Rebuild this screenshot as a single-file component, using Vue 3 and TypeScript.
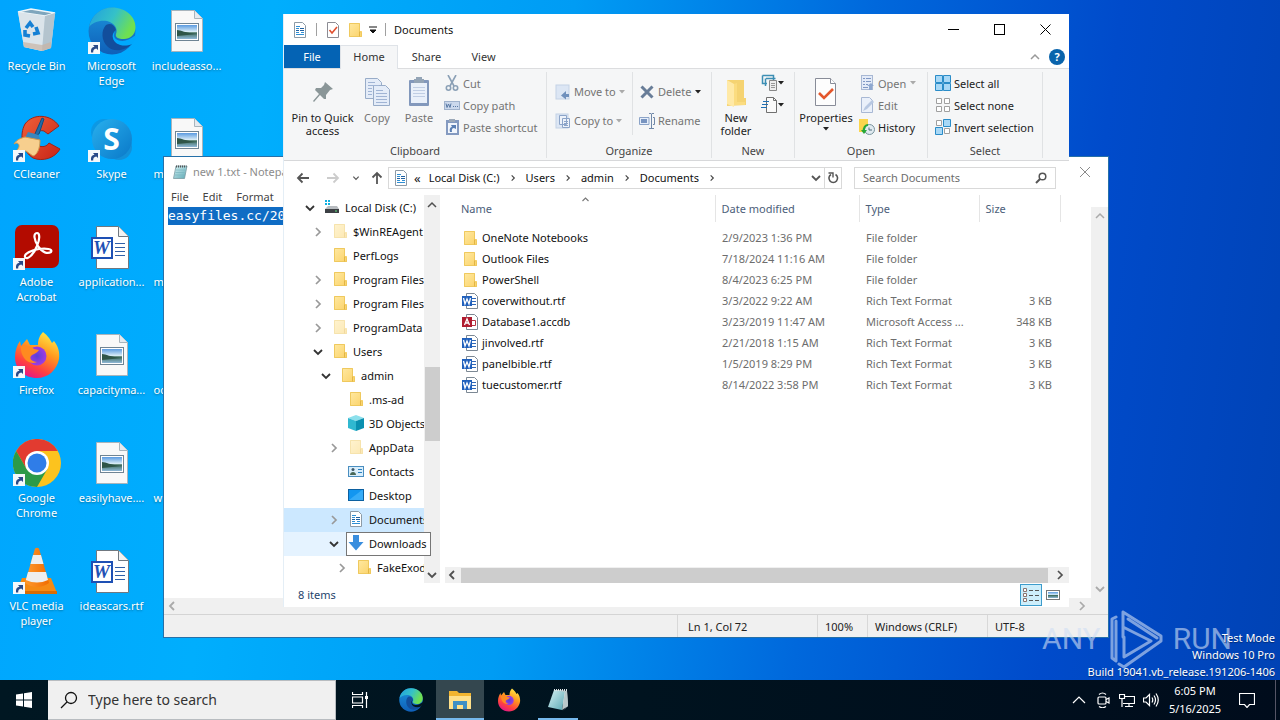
<script setup lang="ts">
import { ref } from 'vue'

interface Shortcut { label: string; icon: string; link?: boolean; cut?: boolean; letter?: string }
interface TreeNode { name: string; icon: string; level: number; state: 'open' | 'closed' | 'none'; cls?: string }
interface FileRow { name: string; icon: string; date: string; type: string; size: string }

const shortcuts: Shortcut[] = [
  { label: 'Recycle Bin', icon: 'bin' },
  { label: 'CCleaner', icon: 'ccleaner', link: true },
  { label: 'Adobe Acrobat', icon: 'acrobat', link: true },
  { label: 'Firefox', icon: 'firefox', link: true },
  { label: 'Google Chrome', icon: 'chrome', link: true },
  { label: 'VLC media player', icon: 'vlc', link: true },
  { label: 'Microsoft Edge', icon: 'edge', link: true },
  { label: 'Skype', icon: 'skype', link: true, letter: 'S' },
  { label: 'application...', icon: 'worddoc', letter: 'W' },
  { label: 'capacityma...', icon: 'picture' },
  { label: 'easilyhave....', icon: 'picture' },
  { label: 'ideascars.rtf', icon: 'worddoc', letter: 'W' },
  { label: 'includeasso...', icon: 'picture' },
  { label: 'm', icon: 'picture', cut: true },
  { label: 'm', icon: 'picture', cut: true },
  { label: 'oc', icon: 'picture', cut: true },
  { label: 'w', icon: 'picture', cut: true }
]

const tree: TreeNode[] = [
  { name: 'Local Disk (C:)', icon: 'disk', level: 0, state: 'open' },
  { name: '$WinREAgent', icon: 'folder', level: 1, state: 'closed', cls: 'hiddenfolder' },
  { name: 'PerfLogs', icon: 'folder', level: 1, state: 'none' },
  { name: 'Program Files', icon: 'folder', level: 1, state: 'closed' },
  { name: 'Program Files', icon: 'folder', level: 1, state: 'closed' },
  { name: 'ProgramData', icon: 'folder', level: 1, state: 'closed', cls: 'hiddenfolder' },
  { name: 'Users', icon: 'folder', level: 1, state: 'open' },
  { name: 'admin', icon: 'folder', level: 2, state: 'open' },
  { name: '.ms-ad', icon: 'folder', level: 3, state: 'none' },
  { name: '3D Objects', icon: 'cube', level: 3, state: 'none' },
  { name: 'AppData', icon: 'folder', level: 3, state: 'closed', cls: 'hiddenfolder' },
  { name: 'Contacts', icon: 'contacts', level: 3, state: 'none' },
  { name: 'Desktop', icon: 'desktop', level: 3, state: 'none' },
  { name: 'Documents', icon: 'docs', level: 3, state: 'closed', cls: 'current' },
  { name: 'Downloads', icon: 'down', level: 3, state: 'open', cls: 'hover' },
  { name: 'FakeExodus', icon: 'folder', level: 4, state: 'closed' }
]

const files: FileRow[] = [
  { name: 'OneNote Notebooks', icon: 'folder', date: '2/9/2023 1:36 PM', type: 'File folder', size: '' },
  { name: 'Outlook Files', icon: 'folder', date: '7/18/2024 11:16 AM', type: 'File folder', size: '' },
  { name: 'PowerShell', icon: 'folder', date: '8/4/2023 6:25 PM', type: 'File folder', size: '' },
  { name: 'coverwithout.rtf', icon: 'word16', date: '3/3/2022 9:22 AM', type: 'Rich Text Format', size: '3 KB' },
  { name: 'Database1.accdb', icon: 'access16', date: '3/23/2019 11:47 AM', type: 'Microsoft Access ...', size: '348 KB' },
  { name: 'jinvolved.rtf', icon: 'word16', date: '2/21/2018 1:15 AM', type: 'Rich Text Format', size: '3 KB' },
  { name: 'panelbible.rtf', icon: 'word16', date: '1/5/2019 8:29 PM', type: 'Rich Text Format', size: '3 KB' },
  { name: 'tuecustomer.rtf', icon: 'word16', date: '8/14/2022 3:58 PM', type: 'Rich Text Format', size: '3 KB' }
]

const crumbs = ['Local Disk (C:)', 'Users', 'admin', 'Documents']
const fileQuery = ref('')
const taskQuery = ref('')
</script>

<template>
  <div class="desktop">
    <svg class="defs" aria-hidden="true">
      <defs>
        <linearGradient id="gEdge1" x1="0" y1="0" x2="1" y2="0.4"><stop offset="0" stop-color="#1f9fe0" /><stop offset=".55" stop-color="#35c1c8" /><stop offset="1" stop-color="#6fe050" /></linearGradient>
        <linearGradient id="gEdge2" x1="0" y1="0" x2="0" y2="1"><stop offset="0" stop-color="#1b93dc" /><stop offset="1" stop-color="#0f5fb8" /></linearGradient>
        <linearGradient id="gFox" x1=".8" y1="0" x2=".3" y2="1"><stop offset="0" stop-color="#fff04a" /><stop offset=".4" stop-color="#ff9a1f" /><stop offset=".75" stop-color="#ff4040" /><stop offset="1" stop-color="#e3158a" /></linearGradient>
        <radialGradient id="gFox2"><stop offset="0" stop-color="#5a3fd8" /><stop offset="1" stop-color="#a03ce0" /></radialGradient>
        <linearGradient id="gSky" x1="0" y1="0" x2="0" y2="1"><stop offset="0" stop-color="#5a9ae0" /><stop offset=".5" stop-color="#dff0f8" /><stop offset=".55" stop-color="#3c6a58" /><stop offset="1" stop-color="#8fb8d8" /></linearGradient>
        <linearGradient id="gSkype" x1="0" y1="0" x2="1" y2="1"><stop offset="0" stop-color="#28b0ee" /><stop offset="1" stop-color="#0a78c8" /></linearGradient>
        <linearGradient id="gFolder" x1="0" y1="0" x2="1" y2="1"><stop offset="0" stop-color="#ffe9a2" /><stop offset="1" stop-color="#fbd268" /></linearGradient>
        <linearGradient id="gCone" x1="0" y1="0" x2="1" y2="0"><stop offset="0" stop-color="#ff9a30" /><stop offset="1" stop-color="#f06c00" /></linearGradient>
        <linearGradient id="gNote" x1="0" y1="0" x2="1" y2="1"><stop offset="0" stop-color="#d8f2f4" /><stop offset="1" stop-color="#5aa8b4" /></linearGradient>
        <linearGradient id="gRed" x1="0" y1="0" x2="1" y2="1"><stop offset="0" stop-color="#f06038" /><stop offset="1" stop-color="#c82418" /></linearGradient>
      </defs>
      <symbol id="bin" viewBox="0 0 48 48">
        <path d="M5 5 18 2 42 6 38 41 29 44 11 40Z" fill="#c8dce8" /><path d="M5 5 18 2 42 6 32 9Z" fill="#7fa6bd" stroke="#eef6fa" stroke-width="1.5" />
        <path d="M5 5 32 9 29 44 11 40Z" fill="#dbe4ea" /><path d="M32 9 42 6 38 41 29 44Z" fill="#b4c4ce" /><path d="M10 35 29 38 38 35 38 41 29 44 11 40Z" fill="#c8b4a4" opacity=".7" />
        <g fill="none" stroke="#1580d4" stroke-width="3.6"><path d="M13 21 17 16 20 20" /><path d="M23 20 25 26 20 27" /><path d="M17 29 12 28 12 23" /></g>
      </symbol>
      <symbol id="edge" viewBox="0 0 48 48">
        <circle cx="24" cy="24" r="23.5" fill="url(#gEdge2)" />
        <path d="M1 20C4 7 14 .5 24 .5 38 .5 47.500 10 47.500 20 47.500 28 42 32 36 32 30 32 27 30 28 27 30 22 27 16 19 14 11 13 4 16 1 20Z" fill="url(#gEdge1)" />
        <path d="M18 18C13 23 13 34 20 40 27 46 38 43 44 37 37 40 27 38 25 31 24 28 27 25 28 23 26 17 22 16 18 18Z" fill="#124e9c" />
        <path d="M28 23C25 27 25 32 31 33.500 36 35 41 33 48 28L48 32 44 37C35 41 26 37 25 31 24 27 26 25 28 23Z" fill="#00a8fc" />
      </symbol>
      <symbol id="edgebar" viewBox="0 0 48 48">
        <circle cx="24" cy="24" r="23.500" fill="url(#gEdge2)" />
        <path d="M1 20C4 7 14 .5 24 .5 38 .5 47.500 10 47.500 20 47.500 28 42 32 36 32 30 32 27 30 28 27 30 22 27 16 19 14 11 13 4 16 1 20Z" fill="url(#gEdge1)" />
        <path d="M18 18C13 23 13 34 20 40 27 46 38 43 44 37 37 40 27 38 25 31 24 28 27 25 28 23 26 17 22 16 18 18Z" fill="#124e9c" />
        <path d="M28 23C25 27 25 32 31 33.500 36 35 41 33 48 28L48 32 44 37C35 41 26 37 25 31 24 27 26 25 28 23Z" fill="#021620" />
      </symbol>
      <symbol id="picture" viewBox="0 0 48 48">
        <path d="M8.500 3.500H31.500L39.500 11.500V44.500H8.500Z" fill="#f8f8f8" stroke="#a8b4bc" /><path d="M31.500 3.500V11.500H39.500" fill="#e4eaf0" stroke="#a8b4bc" />
        <rect x="12.500" y="16.500" width="23" height="17" fill="#fff" stroke="#6f8494" /><rect x="14" y="18" width="20" height="14" fill="url(#gSky)" /><path d="M14 23C18 23 22 26 34 27L14 29Z" fill="#2f5548" />
      </symbol>
      <symbol id="worddoc" viewBox="0 0 48 48">
        <path d="M8.500 3.500H30.500L40.500 13.500V45.500H8.500Z" fill="#fff" stroke="#707880" /><path d="M30.500 3.500V13.500H40.500" fill="#f2f2f2" stroke="#707880" />
        <path d="M27 20.500H37M27 24.500H37M27 28.500H37M27 32.500H37" stroke="#3060a8" /><rect x="4" y="15" width="20" height="20" fill="#fff" stroke="#1e50b4" stroke-width="2" />
      </symbol>
      <symbol id="ccleaner" viewBox="0 0 48 48">
        <path d="M46 11C38-1 20-2 12 9 6 20 9 36 20 43 30 47 42 43 47 34L36 28C33 33 25 33 22 27 20 20 25 14 31 16L35 19Z" fill="url(#gRed)" stroke="#9e2418" />
        <path d="M29 3 31 4 26 19 21 21Z" fill="#206ca8" stroke="#124b7c" /><path d="M15 17 26 20 27 25 12 23Z" fill="#3a86bd" /><path d="M12 22 27 25C27 34 24 40 20 41L13 36 3 36C9 31 5 26 1 29 4 24 9 23 12 22Z" fill="#f7cf8e" stroke="#d09a50" />
      </symbol>
      <symbol id="skype" viewBox="0 0 48 48">
        <circle cx="16" cy="17" r="13" fill="#0c98e4" /><circle cx="31" cy="32" r="13" fill="#1390d8" /><circle cx="24" cy="24" r="20" fill="url(#gSkype)" />
      </symbol>
      <symbol id="acrobat" viewBox="0 0 48 48">
        <rect x="2" y="2" width="44" height="43" rx="7" fill="#b30b00" /><path d="M24 10C20 10 21 17 25 23 29 30 35 31 38 29 40 26 33 25 26 26 18 27 11 31 12 34 14 38 21 31 24 23 27 16 27 10 24 10Z" fill="none" stroke="#fff" stroke-width="2.200" />
      </symbol>
      <symbol id="firefox" viewBox="0 0 48 48">
        <path d="M30 1C35 5 37 8 39 12L41 10C45 15 47 21 46 28 44 39 35 47 24 47 11 47 2 38 2 26 2 20 4 14 7 10L8 15 14 8 17 14 25 14C25 8 27 4 30 1Z" fill="url(#gFox)" />
        <circle cx="24" cy="25" r="9.500" fill="url(#gFox2)" /><path d="M8 16C12 13 18 15 21 18L26 19C24 22 21 23 19 24 15 27 19 31 24 31 15 35 7 25 8 16Z" fill="#ff8a20" />
      </symbol>
      <symbol id="chrome" viewBox="0 0 48 48">
        <circle cx="24" cy="24" r="24" fill="#fcc31e" /><path d="M3.200 12A24 24 0 0 1 44.800 12L24 12 13.600 30Z" fill="#e23b30" /><path d="M3.200 12A24 24 0 0 0 24 48L34.400 30H13.600Z" fill="#2c9a48" />
        <circle cx="24" cy="24" r="12" fill="#fff" /><circle cx="24" cy="24" r="9.500" fill="#2f7de8" />
      </symbol>
      <symbol id="vlc" viewBox="0 0 48 48">
        <path d="M9 31H38L44 46H3Z" fill="#f58a14" /><path d="M3 44H44V47H3Z" fill="#d86c04" /><path d="M22 1.500Q24 0 26 1.500L36 36Q24 44 12 36Z" fill="url(#gCone)" />
        <path d="M20 8H28L30.500 17H17.500ZM15 25H33L35 33Q24 38 12.800 33Z" fill="#eee" />
      </symbol>
      <symbol id="linkmark" viewBox="0 0 12 12"><rect width="12" height="12" fill="#f4f8fb" /><path d="M3 10.500C2.500 7 4 5 6.500 4.800L5 3H10V8L8.300 6.400C6 6.800 5 8.300 5.200 10.500Z" fill="#2a4a88" /></symbol>
      <symbol id="folder" viewBox="0 0 16 16"><path d="M2 1H13V9H15V15H2Z" fill="url(#gFolder)" /><path d="M2.500 1.500H12.500V9.500L14.500 10.500V14.500H2.500Z" fill="none" stroke="#efc95e" /><path d="M12.500 9.500V14.500" stroke="#e2b544" /></symbol>
      <symbol id="docs" viewBox="0 0 16 16"><path d="M2.500.5H10.500L13.500 3.500V15.500H2.500Z" fill="#fff" stroke="#8c9aa6" /><path d="M4 4.500H8M4 6.500H7M4 10.500H7M4 12.500H12M9 10.500H12" stroke="#2f8fd4" /><path d="M8 6.500H12M8 8.500H12M4 8.500H7" stroke="#2060a0" /></symbol>
      <symbol id="disk" viewBox="0 0 16 16"><path d="M1 1H3V3H1ZM4 1H6V3H4ZM1 4H3V6H1ZM4 4H6V6H4Z" fill="#10b0e0" /><path d="M4 7H13L15 10H1Z" fill="#b8bcc0" /><path d="M1 10H15V14H1Z" fill="#3c4044" /><path d="M11 12H13" stroke="#60e080" /></symbol>
      <symbol id="cube" viewBox="0 0 16 16"><path d="M0 3 8 0 16 3 8 6Z" fill="#8ce0ec" /><path d="M0 3 8 6V16L0 13Z" fill="#30b8d0" /><path d="M8 6 16 3V13L8 16Z" fill="#0a90b0" /></symbol>
      <symbol id="contacts" viewBox="0 0 16 16"><rect x=".5" y="3.500" width="15" height="10" fill="#d8eefc" stroke="#4a8ec0" /><circle cx="5" cy="6.500" r="1.500" fill="#405868" /><path d="M2 12C2 8 8 8 8 12Z" fill="#486858" /><path d="M10 6.500H14M10 9.500H14" stroke="#2a80c0" /></symbol>
      <symbol id="desktop" viewBox="0 0 16 16"><rect x=".5" y="2.500" width="15" height="11" fill="#1296f0" stroke="#0c60a0" /><path d="M1 13 14 3H15V13Z" fill="#36acf8" /></symbol>
      <symbol id="down" viewBox="0 0 16 16"><path d="M5 0H11V7H15.500L8 15.500.5 7H5Z" fill="#3a8ede" /></symbol>
      <symbol id="word16" viewBox="0 0 16 16"><path d="M4.500.5H12.500L15.500 3.500V15.500H4.500Z" fill="#fff" stroke="#7c8894" /><path d="M10 5.500H14M10 8.500H14M10 11.500H14" stroke="#3068b8" /><rect y="3" width="10" height="10" fill="#2060bc" /><path d="M1.500 5 3 11 5 6 7 11 8.500 5" fill="none" stroke="#fff" stroke-width="1.300" /></symbol>
      <symbol id="access16" viewBox="0 0 16 16"><path d="M4.500.5H12.500L15.500 3.500V15.500H4.500Z" fill="#fff" stroke="#7c8894" /><path d="M10 6.500H13.500V11.500H10" fill="none" stroke="#b83040" /><rect y="3" width="10" height="10" fill="#b01c30" /><path d="M2.500 11 5 5 7.500 11M3.500 9H6.500" fill="none" stroke="#fff" stroke-width="1.300" /></symbol>
      <symbol id="check" viewBox="0 0 16 16"><path d="M2.500.5H10.500L13.500 3.500V15.500H2.500Z" fill="#fff" stroke="#8c8c94" /><path d="M4.500 8 7 11 12 5" fill="none" stroke="#e05030" stroke-width="1.600" /></symbol>
      <symbol id="chev" viewBox="0 0 12 12"><path d="M4 2 8 6 4 10" fill="none" stroke="currentColor" stroke-width="1.700" /></symbol>
      <symbol id="chevd" viewBox="0 0 12 12"><path d="M2 4 6 8 10 4" fill="none" stroke="currentColor" stroke-width="1.800" /></symbol>
      <symbol id="chevu" viewBox="0 0 12 12"><path d="M2 8 6 4 10 8" fill="none" stroke="currentColor" stroke-width="1.500" /></symbol>
      <symbol id="chevl" viewBox="0 0 12 12"><path d="M8 2 4 6 8 10" fill="none" stroke="currentColor" stroke-width="1.800" /></symbol>
      <symbol id="tri" viewBox="0 0 6 6"><path d="M0 1H6L3 4.500Z" fill="currentColor" /></symbol>
      <symbol id="notepad" viewBox="0 0 16 16"><path d="M4 2H15L12.500 14.500H1.500Z" fill="url(#gNote)" stroke="#7a9aa2" stroke-width=".8" /><path d="M4 2.500H14.500" stroke="#555" stroke-dasharray="1 1" stroke-width="2" /><path d="M4 6H13M3.500 8.500H12.500M3 11H12" stroke="#78b4be" stroke-width=".7" /></symbol>
      <symbol id="notebar" viewBox="0 0 24 24"><path d="M8 2 21 3 22 18 16 23 20 20Z" fill="#e6ecec" /><path d="M8 2 19 3 16 22 2 19Z" fill="url(#gNote)" /><path d="M8 2 21 3 22 18 16 22 19 4Z" fill="#b9c8ca" /><path d="M8 2H21" stroke="#dfe6e8" stroke-dasharray="1 1" stroke-width="2" /></symbol>
      <symbol id="pin" viewBox="0 0 24 24"><path d="M14 2 22 9 19 10 15 15 15 19 13 19 9 15 3 22 2 21 8 14 4 10 5 8 10 8 13 5Z" fill="#8a9698" /></symbol>
      <symbol id="copy" viewBox="0 0 32 32"><g fill="#e4ecf8" stroke="#98acc8"><path d="M4.500 2.500H16.500L20.500 6.500V22.500H4.500Z" /><path d="M12.500 9.500H24.500L28.500 13.500V29.500H12.500Z" /></g><path d="M7 6.500H14M7 9.500H18M7 12.500H11M7 15.500H11M7 18.500H11M15 14.500H22M15 17.500H26M15 20.500H26M15 23.500H26M15 26.500H26" stroke="#a0b4d4" /></symbol>
      <symbol id="paste" viewBox="0 0 32 32"><rect x="6" y="4" width="20" height="26" rx="1" fill="#8298bc" /><rect x="8" y="7" width="16" height="20" fill="#e9f0fa" /><path d="M11 3H13V1H19V3H21V7H11Z" fill="#93a4b6" /><path d="M10 11.500H22M10 14.500H22M10 17.500H22M10 20.500H22" stroke="#c0cee4" /></symbol>
      <symbol id="cut" viewBox="0 0 16 16"><g fill="none" stroke="#8ba0b6" stroke-width="1.600"><path d="M4 0 10 11M12 0 6 11" /><circle cx="4.500" cy="13" r="2.200" /><circle cx="11.500" cy="13" r="2.200" /></g></symbol>
      <symbol id="path" viewBox="0 0 16 16"><rect x=".5" y="4.500" width="15" height="8" fill="#cbd8ec" stroke="#a0b2cc" /><path d="M2 6.500 3 10.500 4.500 7 6 10.500 7 6.500M9 9.500H10M11 9.500H12M13 9.500H14" fill="none" stroke="#5878a4" /></symbol>
      <symbol id="pasteshort" viewBox="0 0 16 16"><rect x="2" y="1" width="13" height="15" fill="#849ac0" /><rect x="4" y="4" width="9" height="10" fill="#f2f6fc" /><path d="M5 0H11V3H5Z" fill="#9ba8b8" /><path d="M6 13C5 9 7 8 8 8L7 6H12V10L10 9C8 9 7.500 11 8 13Z" fill="#5c80b4" /></symbol>
      <symbol id="moveto" viewBox="0 0 16 16"><rect x="1" y="1" width="13" height="14" fill="#dce6f4" stroke="#c4d2e6" /><path d="M14 10H11V7L6 11.500 11 15.500V13H14Z" fill="#6f90bc" /></symbol>
      <symbol id="copyto" viewBox="0 0 16 16"><rect x="1" y="1" width="12" height="14" fill="#dce6f4" stroke="#c4d2e6" /><path d="M4.500 2.500H11.500V11.500H4.500ZM7.500 5.500H14.500V14.500H7.500Z" fill="#edf2fa" stroke="#8ca4c8" /><path d="M9 8.500H13M9 10.500H13M9 12.500H13" stroke="#8ca4c8" /></symbol>
      <symbol id="delete" viewBox="0 0 16 16"><path d="M2.500 2.500 13.500 13.500M13.500 2.500 2.500 13.500" stroke="#687d98" stroke-width="3" /></symbol>
      <symbol id="rename" viewBox="0 0 16 16"><path d="M.5 4.500H10V11.500H.5Z" fill="#e6eefa" stroke="#8ca4c8" /><path d="M2 6H8V10H2Z" fill="#7894c0" /><path d="M12.500 1V15M10 .5H12L12.500 1 13 .5H15M10 15.500H15M14 4.500H15.500V11.500H14" fill="none" stroke="#7088a8" /></symbol>
      <symbol id="bigfolder" viewBox="0 0 24 32"><path d="M3 4H20V22H22V29L3 30Z" fill="#f5d372" /><path d="M3 4 10 8V31L3 28Z" fill="#ffe9a6" /><path d="M10 8 13 7V26H21V29H10Z" fill="#fbdc80" /></symbol>
      <symbol id="newitem" viewBox="0 0 18 18"><path d="M1.500 1.500H12.500V6M1.500 1.500V9.500H6M5 4.500H14.500M4.500 4.500V12" fill="none" stroke="#3c8eb4" stroke-width="1.500" /><path d="M8.500 6.500H15.500V16.500H8.500Z" fill="#eee" stroke="#888" /><path d="M10 9.500H14M10 11.500H14M10 13.500H14" stroke="#999" /></symbol>
      <symbol id="easy" viewBox="0 0 18 18"><path d="M5.500 1.500H12.500L15.500 4.500V16.500H5.500Z" fill="#fafafa" stroke="#707070" /><path d="M12.500 1.500V4.500H15.500" fill="none" stroke="#707070" /><path d="M2 5.500H8M1 8.500H7M0 11.500H6" stroke="#2070b4" /></symbol>
      <symbol id="props" viewBox="0 0 24 32"><path d="M1.500 2.500H16.500L21.500 7.500V29.500H1.500Z" fill="#fdfdfd" stroke="#888c98" /><path d="M16.500 2.500V7.500H21.500" fill="#fff" stroke="#888c98" /><path d="M5 17 10 22 19 13" fill="none" stroke="#e4572c" stroke-width="2.600" /></symbol>
      <symbol id="open" viewBox="0 0 16 16"><rect x="2.500" y=".5" width="11" height="14" fill="#e4ebf8" stroke="#a8b8d4" /><path d="M4 3.500H6M7 3.500H12M4 6.500H6M7 6.500H12M4 9.500H6M7 9.500H9M4 12.500H9" stroke="#8098c4" /><path d="M8 11 12 8 15 11H13V15H10V11Z" fill="#8fa8d0" /></symbol>
      <symbol id="edit" viewBox="0 0 16 16"><path d="M2.500.5H10.500L13.500 3.500V15.500H2.500Z" fill="#eaf0fa" stroke="#a8b8d4" /><path d="M4 14 6 10 13 3 15 5 8 12Z" fill="#b8c8e2" /></symbol>
      <symbol id="history" viewBox="0 0 16 16"><path d="M0 0H9V6H10V13H0Z" fill="#fbd54c" /><circle cx="10.500" cy="10.500" r="5" fill="#e0eaf0" stroke="#78929c" /><path d="M10 8.500V11H13" fill="none" stroke="#506c7a" /><path d="M5 13C4 8 7 6 9 6" fill="none" stroke="#28a838" stroke-width="2.200" /><path d="M2 11H8L5 15Z" fill="#28a838" /></symbol>
      <symbol id="selall" viewBox="0 0 16 16"><path d="M.5.5H7.500V7.500H.5ZM8.500.5H15.500V7.500H8.500ZM.5 8.500H7.500V15.500H.5ZM8.500 8.500H15.500V15.500H8.500Z" fill="#a8d8f6" stroke="#2a8cc8" /></symbol>
      <symbol id="selnone" viewBox="0 0 16 16"><path d="M1.500 1.500H6.500V6.500H1.500ZM9.500 1.500H14.500V6.500H9.500ZM1.500 9.500H6.500V14.500H1.500ZM9.500 9.500H14.500V14.500H9.500Z" fill="#fff" stroke="#a0a0a0" /></symbol>
      <symbol id="selinv" viewBox="0 0 16 16"><path d="M1.500 1.500H6.500V6.500H1.500ZM9.500 9.500H14.500V14.500H9.500Z" fill="#fff" stroke="#a0a0a0" /><path d="M8.500.5H15.500V7.500H8.500ZM.5 8.500H7.500V15.500H.5Z" fill="#a8d8f6" stroke="#2a8cc8" /></symbol>
      <symbol id="lens" viewBox="0 0 12 12"><circle cx="7.500" cy="4.500" r="3.300" fill="none" stroke="currentColor" stroke-width="1.500" /><path d="M5 7 1 11" stroke="currentColor" stroke-width="2" /></symbol>
      <symbol id="biglens" viewBox="0 0 18 18"><circle cx="11" cy="7" r="5.500" fill="none" stroke="#111" stroke-width="1.300" /><path d="M7 11 1 17" stroke="#111" stroke-width="1.300" /></symbol>
      <symbol id="arrow" viewBox="0 0 16 16"><path d="M14 8H3M7.500 3.500 3 8 7.500 12.500" fill="none" stroke="currentColor" stroke-width="1.800" /></symbol>
      <symbol id="explorer" viewBox="0 0 24 24"><path d="M1 3H9L11 5H23V21H1Z" fill="#f2b530" /><path d="M1 8H23V21H1Z" fill="#ffe08a" /><path d="M5 13H19V21H15V17H9V21H5Z" fill="#3f8fc4" /></symbol>
    </svg>

    <main class="shortcuts">
      <button v-for="(s, i) in shortcuts" :key="i" class="shortcut" :class="{ cut: s.cut }" type="button">
        <span class="pic"><svg class="i48"><use :href="'#' + s.icon" /></svg><span v-if="s.letter" class="letter" :class="s.icon">{{ s.letter }}</span><svg v-if="s.link" class="mark"><use href="#linkmark" /></svg></span>
        <span class="cap">{{ s.label }}</span>
      </button>
    </main>

    <section class="notepad" aria-label="Notepad">
      <header class="np-title">
        <svg class="i16"><use href="#notepad" /></svg><span>new 1.txt - Notepad</span>
        <button class="np-close" type="button" aria-label="Close Notepad"><svg viewBox="0 0 12 12"><path d="M1 1 11 11M11 1 1 11" stroke="#8a8a8a" /></svg></button>
      </header>
      <nav class="np-menu"><button type="button">File</button><button type="button">Edit</button><button type="button">Format</button></nav>
      <div class="np-body">
        <div class="np-text"><mark>easyfiles.cc/2025</mark></div>
        <div class="np-vbar"><svg class="i12"><use href="#chevu" /></svg><svg class="i12"><use href="#chevd" /></svg></div>
      </div>
      <div class="np-hbar"><svg class="i12"><use href="#chevl" /></svg><svg class="i12"><use href="#chev" /></svg></div>
      <footer class="np-status"><span>Ln 1, Col 72</span><span>100%</span><span>Windows (CRLF)</span><span>UTF-8</span></footer>
    </section>

    <section class="explorer" aria-label="Documents">
      <header class="titlebar">
        <svg class="i16"><use href="#docs" /></svg><i class="bar"></i>
        <button type="button" aria-label="Properties"><svg class="i16"><use href="#check" /></svg></button>
        <button type="button" aria-label="New folder"><svg class="i16"><use href="#folder" /></svg></button>
        <button type="button" aria-label="Customize toolbar"><svg class="custom" viewBox="0 0 8 8"><path d="M0 1H8M1 4H7L4 7Z" fill="#111" stroke="#111" /></svg></button>
        <i class="bar"></i><h1>Documents</h1>
        <div class="winbtns">
          <button type="button" aria-label="Minimize"><svg viewBox="0 0 11 11"><path d="M0 5.500H11" stroke="#000" /></svg></button>
          <button type="button" aria-label="Maximize"><svg viewBox="0 0 11 11"><rect x=".5" y=".5" width="10" height="10" fill="none" stroke="#000" /></svg></button>
          <button type="button" aria-label="Close"><svg viewBox="0 0 11 11"><path d="M.5.5 10.500 10.500M10.500.5.5 10.500" stroke="#000" /></svg></button>
        </div>
      </header>

      <nav class="tabs">
        <button class="file" type="button">File</button><button class="on" type="button">Home</button><button type="button">Share</button><button type="button">View</button>
        <span class="tabend"><svg class="i12"><use href="#chevu" /></svg><button class="help" type="button" aria-label="Help">?</button></span>
      </nav>

      <div class="ribbon">
        <div class="group g1">
          <div class="tools">
            <button class="big pinbtn" type="button"><svg class="pinicon"><use href="#pin" /></svg><span>Pin to Quick access</span></button>
            <button class="big off" type="button"><svg class="i32"><use href="#copy" /></svg><span>Copy</span></button>
            <button class="big off" type="button"><svg class="i32"><use href="#paste" /></svg><span>Paste</span></button>
            <div class="stack">
              <button class="off" type="button"><svg class="i16"><use href="#cut" /></svg>Cut</button>
              <button class="off" type="button"><svg class="i16"><use href="#path" /></svg>Copy path</button>
              <button class="off" type="button"><svg class="i16"><use href="#pasteshort" /></svg>Paste shortcut</button>
            </div>
          </div>
          <h2>Clipboard</h2>
        </div>
        <div class="group g2">
          <div class="tools">
            <div class="stack wide">
              <button class="off" type="button"><svg class="i16"><use href="#moveto" /></svg>Move to<svg class="tri dim"><use href="#tri" /></svg></button>
              <button class="off" type="button"><svg class="i16"><use href="#copyto" /></svg>Copy to<svg class="tri dim"><use href="#tri" /></svg></button>
            </div>
            <div class="stack wide second">
              <button class="off" type="button"><svg class="i16"><use href="#delete" /></svg>Delete<svg class="tri"><use href="#tri" /></svg></button>
              <button class="off" type="button"><svg class="i16"><use href="#rename" /></svg>Rename</button>
            </div>
          </div>
          <h2>Organize</h2>
        </div>
        <div class="group g3">
          <div class="tools">
            <button class="big" type="button"><svg class="i24"><use href="#bigfolder" /></svg><span>New folder</span></button>
            <div class="stack">
              <button type="button" aria-label="New item"><svg class="i18"><use href="#newitem" /></svg><svg class="tri"><use href="#tri" /></svg></button>
              <button type="button" aria-label="Easy access"><svg class="i18"><use href="#easy" /></svg><svg class="tri"><use href="#tri" /></svg></button>
            </div>
          </div>
          <h2>New</h2>
        </div>
        <div class="group g4">
          <div class="tools">
            <button class="big" type="button"><svg class="i24"><use href="#props" /></svg><span>Properties</span><svg class="tri"><use href="#tri" /></svg></button>
            <div class="stack">
              <button class="off" type="button"><svg class="i16"><use href="#open" /></svg>Open<svg class="tri dim"><use href="#tri" /></svg></button>
              <button class="off" type="button"><svg class="i16"><use href="#edit" /></svg>Edit</button>
              <button type="button"><svg class="i16"><use href="#history" /></svg>History</button>
            </div>
          </div>
          <h2>Open</h2>
        </div>
        <div class="group g5">
          <div class="tools">
            <div class="stack">
              <button type="button"><svg class="i16"><use href="#selall" /></svg>Select all</button>
              <button type="button"><svg class="i16"><use href="#selnone" /></svg>Select none</button>
              <button type="button"><svg class="i16"><use href="#selinv" /></svg>Invert selection</button>
            </div>
          </div>
          <h2>Select</h2>
        </div>
      </div>

      <div class="navrow">
        <button type="button" aria-label="Back"><svg class="i16"><use href="#arrow" /></svg></button>
        <button class="fwd" type="button" aria-label="Forward"><svg class="i16"><use href="#arrow" /></svg></button>
        <button class="recent" type="button" aria-label="Recent locations"><svg class="i8"><use href="#chevd" /></svg></button>
        <button class="up" type="button" aria-label="Up"><svg class="i16"><use href="#arrow" /></svg></button>
        <div class="address">
          <svg class="i16"><use href="#docs" /></svg><span class="laquo">«</span>
          <template v-for="c in crumbs" :key="c"><a href="#">{{ c }}</a><svg class="crumb"><use href="#chev" /></svg></template>
          <button class="drop" type="button" aria-label="Previous locations"><svg class="i12"><use href="#chevd" /></svg></button>
          <button class="reload" type="button" aria-label="Refresh"><svg viewBox="0 0 12 12"><path d="M4 2.500A4.300 4.300 0 1 0 8.500 2.500" fill="none" stroke="#555" stroke-width="1.600" /><path d="M1.500 1H6V5.500" fill="none" stroke="#555" stroke-width="1.400" /></svg></button>
        </div>
        <label class="search"><input v-model="fileQuery" type="text" placeholder="Search Documents" aria-label="Search Documents" /><svg class="i12"><use href="#lens" /></svg></label>
      </div>

      <div class="content">
        <ul class="tree">
          <li v-for="(n, i) in tree" :key="i" :class="n.cls" :style="{ paddingLeft: n.level * 8 + 20 + 'px' }">
            <svg class="i12" :class="n.state"><use v-if="n.state !== 'none'" :href="n.state === 'open' ? '#chevd' : '#chev'" /></svg>
            <button type="button"><svg class="i16"><use :href="'#' + n.icon" /></svg>{{ n.name }}</button>
          </li>
        </ul>
        <div class="vbar"><svg class="i12"><use href="#chevu" /></svg><i></i><svg class="i12"><use href="#chevd" /></svg></div>
        <div class="pane">
          <table>
            <colgroup><col class="c1" /><col class="c2" /><col class="c3" /><col class="c4" /></colgroup>
            <thead><tr><th>Name<svg class="sort"><use href="#chevu" /></svg></th><th>Date modified</th><th>Type</th><th>Size</th></tr></thead>
            <tbody>
              <tr v-for="f in files" :key="f.name"><td><span class="fname"><svg class="i16"><use :href="'#' + f.icon" /></svg>{{ f.name }}</span></td><td>{{ f.date }}</td><td>{{ f.type }}</td><td>{{ f.size }}</td></tr>
            </tbody>
          </table>
          <div class="hbar"><svg class="i12"><use href="#chevl" /></svg><i></i><svg class="i12"><use href="#chev" /></svg></div>
        </div>
      </div>

      <footer class="exstatus">
        <span>8 items</span>
        <button class="on" type="button" aria-label="Details view"><svg viewBox="0 0 18 14"><path d="M1.500.5H4.500V3.500H1.500ZM1.500 5.500H4.500V8.500H1.500ZM1.500 10.500H4.500V13.500H1.500Z" fill="#fff" stroke="#8a7470" /><path d="M7 2.500H11M13 2.500H17M7 7.500H11M13 7.500H17M7 12.500H11M13 12.500H17" stroke="#555" /></svg></button>
        <button type="button" aria-label="Large icons view"><svg viewBox="0 0 14 10"><rect x=".5" y=".5" width="13" height="9" fill="#fff" stroke="#777" /><rect x="2" y="2" width="10" height="6" fill="url(#gSky)" /></svg></button>
      </footer>
    </section>

    <div class="watermark" aria-label="ANY RUN">
      <span>ANY</span>
      <svg viewBox="0 0 56 60"><path d="M7 8 3 10V49L7 52V12M14 3V18L42 32 15 48V28M14 3 52 27V32L15 58 10 55M14 18V28M19 10 48 29" fill="none" stroke="currentColor" stroke-width="3" stroke-linejoin="round" stroke-linecap="round" /></svg>
      <span>RUN</span>
    </div>
    <p class="build"><span>Test Mode</span><span>Windows 10 Pro</span><span>Build 19041.vb_release.191206-1406</span></p>

    <footer class="taskbar">
      <button class="task" type="button" aria-label="Start"><svg class="start" viewBox="0 0 16 16"><path d="M0 2.500 7 1.500V7.500H0ZM8 1.300 16 0V7.500H8ZM0 8.500H7V14.500L0 13.500ZM8 8.500H16V16L8 14.700Z" fill="#fff" /></svg></button>
      <label class="tasksearch"><svg class="i18"><use href="#biglens" /></svg><input v-model="taskQuery" type="text" placeholder="Type here to search" aria-label="Type here to search" /></label>
      <button class="task" type="button" aria-label="Task view"><svg class="start" viewBox="0 0 16 16"><path d="M.5 0V2.500H10.500V0M.5 5H10.500V11H.5ZM.5 16V13.500H10.500V16M14.500 0V16" fill="none" stroke="#fff" stroke-width="1.200" /><path d="M13 4H16V7H13Z" fill="#fff" /></svg></button>
      <button class="task edgetask" type="button" aria-label="Microsoft Edge"><svg class="t24"><use href="#edgebar" /></svg></button>
      <button class="task active" type="button" aria-label="File Explorer"><svg class="t24"><use href="#explorer" /></svg></button>
      <button class="task" type="button" aria-label="Firefox"><svg class="t24"><use href="#firefox" /></svg></button>
      <button class="task running" type="button" aria-label="Notepad"><svg class="t24"><use href="#notebar" /></svg></button>
      <div class="tray">
        <button type="button" aria-label="Show hidden icons"><svg viewBox="0 0 16 16"><path d="M2 11 8 5 14 11" /></svg></button>
        <button type="button" aria-label="Meet Now"><svg viewBox="0 0 16 16"><rect x="3" y="5" width="8" height="7" rx="1" /><path d="M11 7.500 14 6V11L11 9.500M4 2.500Q7.500-.5 11 2.500M4 14.500Q7.500 17 11 14.500" /></svg></button>
        <button type="button" aria-label="Network"><svg viewBox="0 0 16 16"><path d="M5 4.500H15.500V11.500H4M10 11.500V14.500M6 14.500H14M.5 2.500H5.500V6.500H.5ZM3 6.500V15" /></svg></button>
        <button type="button" aria-label="Volume"><svg viewBox="0 0 16 16"><path d="M.5 6V10H3L6.500 13.500V2.500L3 6ZM9 5.500Q10.500 8 9 10.500M11 3.500Q14 8 11 12.500M13 1.500Q17.500 8 13 14.500" /></svg></button>
        <time><span>6:05 PM</span><span>5/16/2025</span></time>
        <button class="note" type="button" aria-label="Notifications"><svg viewBox="0 0 16 16"><path d="M.5 1.500H15.500V12.500H10.500L8 15.500 5.500 12.500H.5Z" /></svg></button>
        <i class="peek"></i>
      </div>
    </footer>
  </div>
</template>

<style>
html, body { margin: 0; overflow: hidden; }
</style>

<style scoped>
* { box-sizing: border-box; }
.desktop { position: relative; width: 100%; height: 100vh; overflow: hidden; font: 11px/15px "Noto Sans", "Open Sans", sans-serif; color: #111; background: linear-gradient(97deg, #00a5fe 0%, #00aefd 20%, #009cf4 42%, #0068dc 64%, #004bcb 82%, #0042b4 100%); }
.defs { position: absolute; width: 0; height: 0; }
button, input { font: inherit; color: inherit; border: 0; background: none; padding: 0; margin: 0; }
button { display: flex; align-items: center; white-space: nowrap; }
svg { display: block; flex: none; }
h1, h2, p, ul { margin: 0; padding: 0; font-size: 11px; font-weight: normal; }
a { color: inherit; text-decoration: none; }
.i8 { width: 8px; height: 8px; }
.i12 { width: 12px; height: 12px; }
.i16 { width: 16px; height: 16px; }
.i18 { width: 18px; height: 18px; }
.i24 { width: 24px; height: 32px; }
.i32 { width: 32px; height: 32px; }
.i48 { width: 48px; height: 48px; }
.tri { width: 6px; height: 6px; color: #222; }
.tri.dim { color: #aaa; }

.shortcuts { display: grid; grid-auto-flow: column; grid-template-rows: repeat(6, 108px); grid-auto-columns: 75px; justify-content: start; padding-top: 7px; margin-left: -1px; }
.shortcut { flex-direction: column; align-items: center; color: #fff; white-space: normal; text-align: center; text-shadow: 0 1px 2px #0458; }
.pic { position: relative; margin-bottom: 3px; }
.letter { position: absolute; text-shadow: none; }
.letter.skype { left: 0; right: 0; top: 6px; font: bold 30px/36px "Open Sans", sans-serif; }
.letter.worddoc { left: 4px; top: 15px; width: 20px; font: italic bold 19px/20px "Liberation Serif", serif; color: #1e50b4; display: flex; justify-content: center; }
.mark { position: absolute; left: 0; bottom: 1px; width: 12px; height: 12px; }
.cap { width: 72px; }
.cut .cap { text-align: left; padding-left: 3px; }

.notepad { position: absolute; left: 164px; right: 172px; top: 157px; bottom: 83px; display: flex; flex-direction: column; background: #fff; box-shadow: 0 0 0 1px #2670a8; }
.np-title { display: flex; align-items: center; height: 29px; padding: 0 17px 0 8px; gap: 5px; color: #8c8c8c; }
.np-close { margin-left: auto; }
.np-close svg { width: 12px; height: 12px; }
.np-menu { display: flex; height: 21px; padding-left: 7px; gap: 14px; color: #444; }
.np-body { flex: 1; display: flex; min-height: 0; }
.np-text { flex: 1; padding-left: 4px; overflow: hidden; font: 13px/18px "DejaVu Sans Mono", monospace; }
.np-text mark { display: inline-block; background: #0f6cc4; color: #fff; }
.np-vbar { width: 17px; background: #f0f0f0; color: #aaa; display: flex; flex-direction: column; justify-content: space-between; align-items: center; padding: 3px 0; }
.np-hbar { height: 17px; background: #f0f0f0; color: #aaa; display: flex; justify-content: space-between; align-items: center; padding: 0 20px 0 2px; border-bottom: 1px solid #d4d4d4; }
.np-status { display: flex; justify-content: flex-end; height: 22px; background: #f0f0f0; color: #222; }
.np-status span { border-left: 1px solid #d8d8d8; padding: 4px 0 0 7px; width: 50px; white-space: nowrap; }
.np-status span:nth-child(1) { width: 140px; padding-left: 10px; }
.np-status span:nth-child(3) { width: 120px; }
.np-status span:nth-child(4) { width: 121px; }

.explorer { position: absolute; left: 283px; right: 211px; top: 14px; bottom: 113px; display: flex; flex-direction: column; background: #fff; border-left: 1px solid #e4eef6; }
.titlebar { display: flex; align-items: center; height: 31px; padding: 0 1px 0 8px; gap: 6px; }
.titlebar .bar { width: 1px; height: 13px; background: #a0a0a0; margin: 0 2px; }
.titlebar .custom { width: 8px; height: 8px; }
.winbtns { margin-left: auto; display: flex; }
.winbtns button { width: 46px; height: 30px; justify-content: center; }
.winbtns svg { width: 11px; height: 11px; }
.tabs { display: flex; height: 24px; color: #333; border-bottom: 1px solid #dcdddf; }
.tabs > button { justify-content: center; width: 57px; height: 23px; border: 1px solid transparent; }
.tabs .file { width: 56px; background: #0463b4; color: #fff; }
.tabs .on { width: 58px; height: 24px; background: #f5f6f7; border-color: #dfe3e8; border-bottom: 0; margin-bottom: -1px; padding-bottom: 2px; }
.tabend { margin-left: auto; display: flex; align-items: center; gap: 8px; padding-right: 4px; color: #999; }
.help { justify-content: center; width: 16px; height: 16px; border-radius: 50%; background: #0a64ac; color: #fff; font-weight: bold; }

.ribbon { display: flex; height: 92px; background: #f5f6f7; border-bottom: 1px solid #d7d8da; color: #222; padding-top: 3px; }
.group { display: flex; flex-direction: column; border-right: 1px solid #e0e2e4; margin-bottom: 2px; }
.g1 { width: 263px; } .g2 { width: 165px; } .g3 { width: 83px; } .g4 { width: 133px; } .g5 { width: 115px; }
.tools { flex: 1; display: flex; align-items: flex-start; }
.group h2 { text-align: center; line-height: 15px; color: #454545; }
.off { color: #747474; }
.big { flex-direction: column; width: 42px; padding-top: 4px; white-space: normal; text-align: center; line-height: 13px; }
.big svg { margin-bottom: 3px; }
.big .tri { margin: 2px 0 0; }
.pinbtn { width: 72px; padding: 4px 0 0 5px; }
.pinicon { width: 24px; height: 26px; margin: 3px 0; }
.big .pinicon { margin-bottom: 6px; }
.stack { display: flex; flex-direction: column; padding: 0 0 0 4px; }
.stack button { height: 22px; gap: 3px; }
.stack .tri { margin-left: 1px; }
.wide { padding: 5px 0 0 8px; width: 85px; }
.wide button { height: 29px; }
.wide .dim { margin-left: 0; }
.second { border-left: 1px solid #e0e2e4; padding-left: 6px; width: 78px; }
.g3 .big { width: 48px; } .g3 .stack { padding-left: 1px; } .g3 .stack .tri { margin-left: -4px; }
.g4 .big { width: 62px; } .g4 .stack { padding-left: 2px; }
.g5 .stack { padding-left: 7px; }

.navrow { display: flex; align-items: center; height: 34px; padding: 0 13px 0 11px; color: #555; }
.navrow .fwd { margin-left: 14px; color: #ccc; }
.navrow .fwd svg { transform: rotate(180deg); }
.navrow .recent { margin-left: 11px; }
.navrow .up { margin: 0 3px 0 9px; }
.navrow .up svg { transform: rotate(90deg); }
.address { flex: 1; display: flex; align-items: center; height: 22px; border: 1px solid #d9d9d9; padding-left: 4px; color: #111; white-space: nowrap; }
.address a { padding-bottom: 1px; }
.laquo { margin: 0 8px 0 5px; font-size: 13px; }
.crumb { width: 8px; height: 8px; margin: 0 9px; color: #444; }
.drop { margin-left: auto; padding-right: 2px; color: #555; }
.reload { width: 17px; height: 20px; justify-content: center; border-left: 1px solid #d9d9d9; }
.reload svg { width: 12px; height: 12px; }
.search { display: flex; align-items: center; width: 202px; height: 22px; margin-left: 12px; padding: 0 8px; border: 1px solid #d9d9d9; color: #555; }
.search input { flex: 1; min-width: 0; outline: 0; padding-bottom: 1px; }
.search input::placeholder { color: #6d6d6d; opacity: 1; }

.content { flex: 1; display: flex; min-height: 0; }
.tree { width: 140px; padding-top: 1px; list-style: none; }
.tree li { display: flex; align-items: center; height: 24px; overflow: hidden; white-space: nowrap; gap: 6px; }
.tree button { flex: none; height: 24px; padding: 0 2px 2px; gap: 5px; }
.tree .closed { color: #999; }
.tree .open { color: #333; }
.hiddenfolder button svg { opacity: .5; }
.tree .current { background: #cce8ff; }
.tree .hover { position: relative; z-index: 1; overflow: visible; background: #e5f3ff; }
.tree .hover button { background: #fff; outline: 1px solid #767676; outline-offset: -1px; padding-right: 4px; }
.vbar { width: 16px; display: flex; flex-direction: column; align-items: center; background: #f0f0f0; color: #505050; padding: 4px 0 2px; }
.vbar i { width: 15px; height: 74px; margin: auto 0 128px; background: #cdcdcd; }
.pane { flex: 1; min-width: 0; display: flex; flex-direction: column; justify-content: space-between; padding-left: 5px; }
table { table-layout: fixed; width: 615px; border-collapse: collapse; color: #6d6d6d; }
.c1 { width: 270px; } .c2 { width: 144px; } .c3 { width: 120px; } .c4 { width: 81px; }
th { position: relative; height: 27px; padding: 0 0 0 6px; text-align: left; font-weight: normal; color: #4c607a; border-right: 1px solid #e5e5e5; }
th:first-child { padding-left: 16px; }
thead::after { content: ""; display: block; height: 5px; }
.sort { position: absolute; left: 136px; top: 0; width: 9px; height: 9px; color: #777; }
td { height: 21px; padding: 0 0 0 7px; white-space: nowrap; }
td:first-child { padding-left: 17px; color: #111; }
td:last-child { text-align: right; padding-right: 8px; }
.fname { display: flex; align-items: center; gap: 4px; }
.hbar { display: flex; align-items: center; height: 16px; background: #f0f0f0; color: #505050; padding: 0 3px 0 1px; gap: 3px; }
.hbar i { flex: 1; height: 15px; background: #cdcdcd; margin-right: 3px; }
.exstatus { display: flex; align-items: center; height: 24px; padding: 0 5px 0 14px; color: #26446c; }
.exstatus span { margin-right: auto; padding-bottom: 2px; }
.exstatus button { width: 22px; height: 22px; justify-content: center; }
.exstatus .on { background: #cdeefb; border: 1px solid #3c9ccc; }
.exstatus .on svg { width: 18px; height: 14px; }
.exstatus button:last-child svg { width: 14px; height: 10px; }

.watermark { position: absolute; right: 48px; bottom: 51px; display: flex; align-items: center; color: #d0def4; opacity: .6; font: 30px/60px Roboto, "Liberation Sans", sans-serif; gap: 8px; }
.watermark svg { width: 56px; height: 60px; }
.build { position: absolute; right: 5px; bottom: 40px; display: flex; flex-direction: column; align-items: flex-end; color: #fff; line-height: 17px; text-shadow: 0 1px 1px #0006; }

.taskbar { position: absolute; left: 0; right: 0; bottom: 0; height: 40px; display: flex; background: linear-gradient(90deg, #001722, #00131f 50%, #000c1c); }
.task { width: 48px; height: 40px; justify-content: center; margin-right: 1px; }
.task:first-child { margin-right: 0; }
.start { width: 16px; height: 16px; }
.t24 { width: 24px; height: 24px; }
.edgetask { margin-left: 2px; }
.tasksearch { display: flex; align-items: center; width: 288px; padding-left: 12px; gap: 10px; background: #f0f0f0; border: 1px solid #b8bcc0; border-left: 0; color: #222; font-size: 14px; line-height: 20px; }
.tasksearch input { width: 200px; outline: 0; }
.tasksearch input::placeholder { color: #333; opacity: 1; }
.active { background: #34474f; box-shadow: inset 0 -2px #76b9ed; }
.running { background: linear-gradient(#76b9ed, #76b9ed) center bottom / 40px 2px no-repeat; }
.tray { display: flex; align-items: center; margin-left: auto; color: #fff; }
.tray button { width: 24px; height: 40px; justify-content: center; }
.tray svg { width: 16px; height: 16px; fill: none; stroke: #fff; stroke-width: 1.2; }
.tray time { display: flex; flex-direction: column; align-items: center; width: 64px; line-height: 18px; }
.tray .note { width: 40px; }
.peek { width: 5px; height: 40px; margin-left: 8px; border-left: 1px solid #556; }
</style>
